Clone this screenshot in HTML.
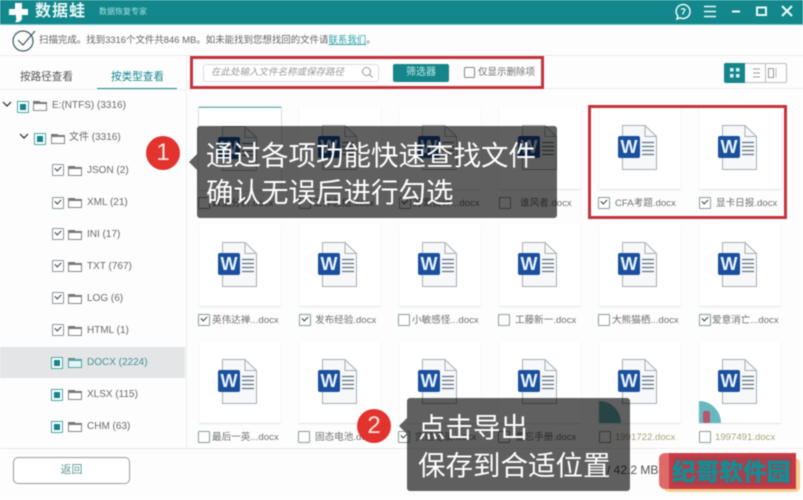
<!DOCTYPE html>
<html lang="zh">
<head>
<meta charset="utf-8">
<title>数据蛙</title>
<style>
html,body{margin:0;padding:0;background:#fff}
#p{position:relative;width:803px;height:500px;overflow:hidden;background:#fdfdfd;font-family:"Liberation Sans","Noto Sans CJK SC",sans-serif;color:#555;filter:blur(.55px)}
#p div,#p span,#p svg{position:absolute;white-space:nowrap}
.c{width:82px;height:82px;background:#fff;box-shadow:0 1px 1px rgba(0,0,0,.1),0 0 2px rgba(0,0,0,.04)}
.c svg{left:19px;top:18px}
.c .w{left:21px;top:30px;width:18px;height:20px;font:bold 18px/20px "Liberation Sans",sans-serif;color:#e8f3fb;text-align:center}
.b{width:10px;height:10px;border:1px solid #8a9a9a;border-radius:1px;background:#fff}
.b.k:after{content:"";position:absolute;left:2px;top:1px;width:5px;height:3px;border:solid #333;border-width:0 0 1.3px 1.3px;transform:rotate(-45deg)}
.l{font-size:9.6px;line-height:14px;color:#707070}
.t{font-size:10px;line-height:14px;color:#6a6a6a}
.fc{width:12px;height:6px;border:1px solid #888;border-top:2px solid #777;background:#fff}
.fc:before{content:"";position:absolute;left:-1px;top:-3px;width:7px;height:1px;background:#777}
.m{width:10px;height:10px;border:1px solid #4da8a8;background:#fff}
.m:after{content:"";position:absolute;left:2px;top:2px;width:6px;height:6px;background:#15858a}
.bg{background:#606060;border-radius:3px;mix-blend-mode:multiply}
.tip{color:#fff;font-size:27.5px}
.num{width:34px;height:34px;border-radius:50%;background:#e2332f;color:#fbe6e0;text-align:center;font:24px/34px "Liberation Sans",sans-serif}
</style>
</head>
<body>
<div id="p">
<svg width="0" height="0" style="left:0;top:0"><defs><symbol id="d" viewBox="0 0 44 48"><path d="M4.5.5H27L38.500 11.500V44.500H4.500Z" fill="#f7f8fa" stroke="#a9adb2"/><path d="M27 .5V11.500H38.500" fill="none" stroke="#a9adb2"/><path d="M24 17.500H36M24 21.500H36M24 25.500H36M24 29.500H36" stroke="#5f7180" stroke-width="1.300"/><rect x="0" y="11" width="22" height="22" rx="2" fill="#1a4f9e"/></symbol></defs></svg>

<!-- header -->
<div style="left:0;top:0;width:803px;height:24px;background:#12878c;border-bottom:1px solid #6cc4c6"></div>
<svg style="left:8px;top:2px" width="22" height="22" viewBox="0 0 22 22"><path d="M7 1h7v6h6v6h-6v4q-2 4-7 3q2-2 1-5v-2H1V7h6z" fill="#fff"/></svg>
<div style="left:35px;top:2px;font-size:16px;line-height:20px;font-weight:bold;color:#e8f7f5;letter-spacing:1px">数据蛙</div>
<div style="left:99px;top:5px;font-size:8px;line-height:14px;color:#a9e2e2">数据恢复专家</div>
<svg style="left:672px;top:1px" width="125" height="22" viewBox="0 0 125 22" fill="none" stroke="#eef9f9"><path d="M11 3.500a7 7 0 1 1-3 13.300l-3 1.200 .8-3A7 7 0 0 1 11 3.500Z" stroke-width="1.500"/><path d="M9 8.500q2-1.600 4 0L10.500 13.500" stroke-width="1.300"/><path d="M32 5.500H44M32 10.500H44M32 15.500H44" stroke-width="1.500"/><path d="M60 10.500H68" stroke-width="2"/><rect x="85" y="6.500" width="9" height="7.500" stroke-width="2"/><path d="M110 5L120 15M120 5L110 15" stroke-width="2"/></svg>

<!-- notice -->
<svg style="left:11px;top:28px" width="26" height="24" viewBox="0 0 26 24" fill="none" stroke="#3d5a5f" stroke-width="1.200"><circle cx="12" cy="13" r="10"/><path d="M7 12l5 5L24 3"/></svg>
<div style="left:39px;top:34px;font-size:9.45px;line-height:14px;color:#666">扫描完成。找到3316个文件共846 MB。如未能找到您想找回的文件请<span style="position:static;color:#2aa2a8;text-decoration:underline">联系我们</span>。</div>
<div style="left:0;top:55px;width:803px;height:1px;background:#eeeeee"></div>

<!-- tabs -->
<div style="left:20px;top:70px;font-size:10.6px;line-height:15px;color:#555">按路径查看</div>
<div style="left:111px;top:70px;font-size:10.6px;line-height:15px;color:#15858a">按类型查看</div>
<div style="left:97px;top:88px;width:80px;height:1px;background:#15858a"></div>
<div style="left:0;top:89px;width:186px;height:1px;background:#f0f0f0"></div>
<div style="left:186px;top:56px;width:1px;height:392px;background:#ececec"></div>
<div style="left:187px;top:88px;width:616px;height:1px;background:#eeeeee"></div>

<!-- tree -->
<svg style="left:0;top:96px" width="40" height="60" viewBox="0 0 40 60" fill="none" stroke="#222" stroke-width="1.200"><path d="M3 6l4 4 4-4"/><path d="M20 38l4 4 4-4"/></svg>
<div class="m" style="left:17px;top:101px"></div><div class="fc" style="left:33px;top:102px"></div><div class="t" style="left:52px;top:99px">E:(NTFS) (3316)</div>
<div class="m" style="left:34px;top:133px"></div><div class="fc" style="left:51px;top:135px"></div><div class="t" style="left:69px;top:131px">文件 (3316)</div>
<div class="b k" style="left:52px;top:164px"></div><div class="fc" style="left:68px;top:167px"></div><div class="t" style="left:87px;top:164px">JSON (2)</div>
<div class="b k" style="left:52px;top:197px"></div><div class="fc" style="left:68px;top:199px"></div><div class="t" style="left:87px;top:196px">XML (21)</div>
<div class="b k" style="left:52px;top:228px"></div><div class="fc" style="left:68px;top:231px"></div><div class="t" style="left:87px;top:228px">INI (17)</div>
<div class="b k" style="left:52px;top:260px"></div><div class="fc" style="left:68px;top:263px"></div><div class="t" style="left:87px;top:260px">TXT (767)</div>
<div class="b k" style="left:52px;top:292px"></div><div class="fc" style="left:68px;top:295px"></div><div class="t" style="left:87px;top:292px">LOG (6)</div>
<div class="b k" style="left:52px;top:324px"></div><div class="fc" style="left:68px;top:327px"></div><div class="t" style="left:87px;top:324px">HTML (1)</div>
<div style="left:0;top:347px;width:185px;height:31px;background:#e4e5e7"></div>
<div class="m" style="left:51px;top:357px"></div><div class="fc" style="left:68px;top:359px;border-color:#4da8a8;background:#e8f4f4"></div><div class="t" style="left:87px;top:356px;color:#3f9496">DOCX (2224)</div>
<div class="m" style="left:51px;top:389px"></div><div class="fc" style="left:68px;top:391px"></div><div class="t" style="left:87px;top:388px">XLSX (115)</div>
<div class="m" style="left:51px;top:421px"></div><div class="fc" style="left:68px;top:423px"></div><div class="t" style="left:87px;top:420px">CHM (63)</div>

<!-- toolbar -->
<div style="left:203px;top:64px;width:174px;height:16px;border:1px solid #ddd;border-radius:3px;background:#fff"></div>
<div style="left:211px;top:65px;font-size:9.500px;line-height:15px;font-style:italic;color:#9a9a9a">在此处输入文件名称或保存路径</div>
<svg style="left:361px;top:66px" width="13" height="13" viewBox="0 0 13 13" fill="none" stroke="#999"><circle cx="5.500" cy="5.500" r="4"/><path d="M8.500 8.500l3 3"/></svg>
<div style="left:393px;top:64px;width:56px;height:18px;background:#15858a;border-radius:2px;color:#bfeaea;font-size:10px;line-height:18px;text-align:center">筛选器</div>
<div style="left:464px;top:67px;width:9px;height:9px;border:1px solid #888;border-radius:1px"></div>
<div style="left:478px;top:66px;font-size:9.500px;line-height:14px;color:#707070">仅显示删除项</div>
<div style="left:724px;top:63px;width:61px;height:18px;border:1px solid #bbb;border-radius:2px;background:#fff"></div>
<div style="left:724px;top:63px;width:21px;height:20px;background:#15858a;border-radius:2px 0 0 2px"></div>
<svg style="left:724px;top:63px" width="63" height="20" viewBox="0 0 63 20"><g fill="#d9f2f2"><rect x="6" y="5" width="3.500" height="3.500"/><rect x="12" y="5" width="3.500" height="3.500"/><rect x="6" y="11" width="3.500" height="3.500"/><rect x="12" y="11" width="3.500" height="3.500"/></g><path d="M29 6h7M29 10h7M29 14h7" stroke="#999"/><path d="M41.500 0v20M52 5v10" stroke="#bbb"/><rect x="44.500" y="5.500" width="5" height="9" fill="none" stroke="#999"/></svg>

<!-- grid -->
<div class="c" style="left:199px;top:107px;border-top:1px solid #57b4ae;outline:1px solid #ddd"><svg width="44" height="48"><use href="#d"/></svg><span class="w">W</span></div>
<div class="c" style="left:299px;top:107px"><svg width="44" height="48"><use href="#d"/></svg><span class="w">W</span></div>
<div class="c" style="left:399px;top:107px"><svg width="44" height="48"><use href="#d"/></svg><span class="w">W</span></div>
<div class="c" style="left:499px;top:107px"><svg width="44" height="48"><use href="#d"/></svg><span class="w">W</span></div>
<div class="c" style="left:599px;top:107px"><svg width="44" height="48"><use href="#d"/></svg><span class="w">W</span></div>
<div class="c" style="left:699px;top:107px"><svg width="44" height="48"><use href="#d"/></svg><span class="w">W</span></div>

<div class="b" style="left:198px;top:197px"></div><div class="l" style="left:212px;top:197px">数据分析.docx</div>
<div class="b" style="left:299px;top:197px"></div><div class="l" style="left:313px;top:197px">工作总结.docx</div>
<div class="b k" style="left:399px;top:197px"></div><div class="l" style="left:413px;top:197px">方案设计...docx</div>
<div class="b" style="left:499px;top:197px"></div><div class="l" style="left:520px;top:197px">谁风者.docx</div>
<div class="b k" style="left:598px;top:197px"></div><div class="l" style="left:615px;top:197px">CFA考题.docx</div>
<div class="b k" style="left:699px;top:197px"></div><div class="l" style="left:716px;top:197px">显卡日报.docx</div>

<div class="c" style="left:199px;top:224px"><svg width="44" height="48"><use href="#d"/></svg><span class="w">W</span></div>
<div class="c" style="left:299px;top:224px"><svg width="44" height="48"><use href="#d"/></svg><span class="w">W</span></div>
<div class="c" style="left:399px;top:224px"><svg width="44" height="48"><use href="#d"/></svg><span class="w">W</span></div>
<div class="c" style="left:499px;top:224px"><svg width="44" height="48"><use href="#d"/></svg><span class="w">W</span></div>
<div class="c" style="left:599px;top:224px"><svg width="44" height="48"><use href="#d"/></svg><span class="w">W</span></div>
<div class="c" style="left:699px;top:224px"><svg width="44" height="48"><use href="#d"/></svg><span class="w">W</span></div>

<div class="b k" style="left:198px;top:314px"></div><div class="l" style="left:212px;top:314px">英伟达禅...docx</div>
<div class="b k" style="left:299px;top:314px"></div><div class="l" style="left:315px;top:314px">发布经验.docx</div>
<div class="b" style="left:398px;top:314px"></div><div class="l" style="left:412px;top:314px">小敏感怪...docx</div>
<div class="b" style="left:498px;top:314px"></div><div class="l" style="left:515px;top:314px">工藤新一.docx</div>
<div class="b" style="left:598px;top:314px"></div><div class="l" style="left:612px;top:314px">大熊猫栖...docx</div>
<div class="b k" style="left:699px;top:314px"></div><div class="l" style="left:712px;top:314px">爱意消亡...docx</div>

<div class="c" style="left:199px;top:341px"><svg width="44" height="48"><use href="#d"/></svg><span class="w">W</span></div>
<div class="c" style="left:299px;top:341px"><svg width="44" height="48"><use href="#d"/></svg><span class="w">W</span></div>
<div class="c" style="left:399px;top:341px"><svg width="44" height="48"><use href="#d"/></svg><span class="w">W</span></div>
<div class="c" style="left:499px;top:341px"><svg width="44" height="48"><use href="#d"/></svg><span class="w">W</span></div>
<div class="c" style="left:599px;top:341px"><svg width="44" height="48"><use href="#d"/></svg><span class="w">W</span></div>
<div class="c" style="left:699px;top:341px"><svg width="44" height="48"><use href="#d"/></svg><span class="w">W</span></div>
<svg style="left:599px;top:401px" width="22" height="22" viewBox="0 0 22 22"><path d="M0 22V0A22 22 0 0 1 22 22Z" fill="#6bb4b8"/></svg>
<svg style="left:699px;top:401px" width="22" height="22" viewBox="0 0 22 22"><path d="M0 22V0A22 22 0 0 1 22 22Z" fill="#68b9bf"/><rect x="4" y="10" width="7" height="12" rx="2" fill="#b5566a"/></svg>

<div class="b" style="left:198px;top:431px"></div><div class="l" style="left:212px;top:431px">最后一英...docx</div>
<div class="b" style="left:298px;top:431px"></div><div class="l" style="left:315px;top:431px">固态电池.docx</div>
<div class="b k" style="left:398px;top:431px"></div><div class="l" style="left:415px;top:431px">实验记录.docx</div>
<div class="b" style="left:498px;top:431px"></div><div class="l" style="left:515px;top:431px">备忘手册.docx</div>
<div class="b" style="left:599px;top:431px"></div><div class="l" style="left:615px;top:431px;color:#a8a67c">1991722.docx</div>
<div class="b" style="left:699px;top:431px"></div><div class="l" style="left:715px;top:431px;color:#a8a67c">1997491.docx</div>

<!-- footer -->
<div style="left:0;top:448px;width:803px;height:52px;background:#fdfdfd;border-top:1px solid #ececec"></div>
<div style="left:13px;top:457px;width:115px;height:25px;border:1px solid #9a9a9a;border-radius:5px;background:#fff;color:#5d9698;font-size:11px;line-height:25px;text-align:center">返回</div>
<div style="left:607px;top:462px;font-size:12px;line-height:16px;color:#555">/ 42.2 MB</div>

<!-- watermark -->
<div style="left:664px;top:458px;width:136px;height:34px;background:#f7cd90;border-radius:5px"></div>
<div style="left:659px;top:453px;width:30px;height:36px;background:#df6a6a;border-radius:6px 0 0 6px"></div>
<div style="left:669px;top:453px;width:127px;height:36px;background:#c83b45"></div>
<div style="left:673px;top:457px;width:119px;height:28px;background:#a8404e;border-radius:2px"></div>
<div style="left:672px;top:459px;font-size:23.500px;line-height:26px;font-weight:bold;color:#0f9096;-webkit-text-stroke:.5px #0f9096;letter-spacing:.2px">纪哥软件园</div>

<!-- callouts -->
<div class="bg" style="left:197px;top:126px;width:360px;height:92px"></div>
<div style="left:189px;top:154px;width:0;height:0;border:8px solid transparent;border-left:0;border-right:8px solid #606060"></div>
<div class="tip" style="left:206px;top:137px;line-height:37px">通过各项功能快速查找文件<br>确认无误后进行勾选</div>
<div class="num" style="left:146px;top:136px">1</div>
<div class="bg" style="left:407px;top:398px;width:223px;height:93px"></div>
<div style="left:399px;top:418px;width:0;height:0;border:8px solid transparent;border-left:0;border-right:8px solid #606060"></div>
<div class="tip" style="left:418px;top:409px;line-height:38px">点击导出<br>保存到合适位置</div>
<div class="num" style="left:357px;top:409px">2</div>

<!-- red frames -->
<div style="left:190px;top:56px;width:348px;height:27px;border:3px solid #c1343c"></div>
<div style="left:588px;top:105px;width:193px;height:108px;border:3px solid #c1343c"></div>
</div>
</body>
</html>
